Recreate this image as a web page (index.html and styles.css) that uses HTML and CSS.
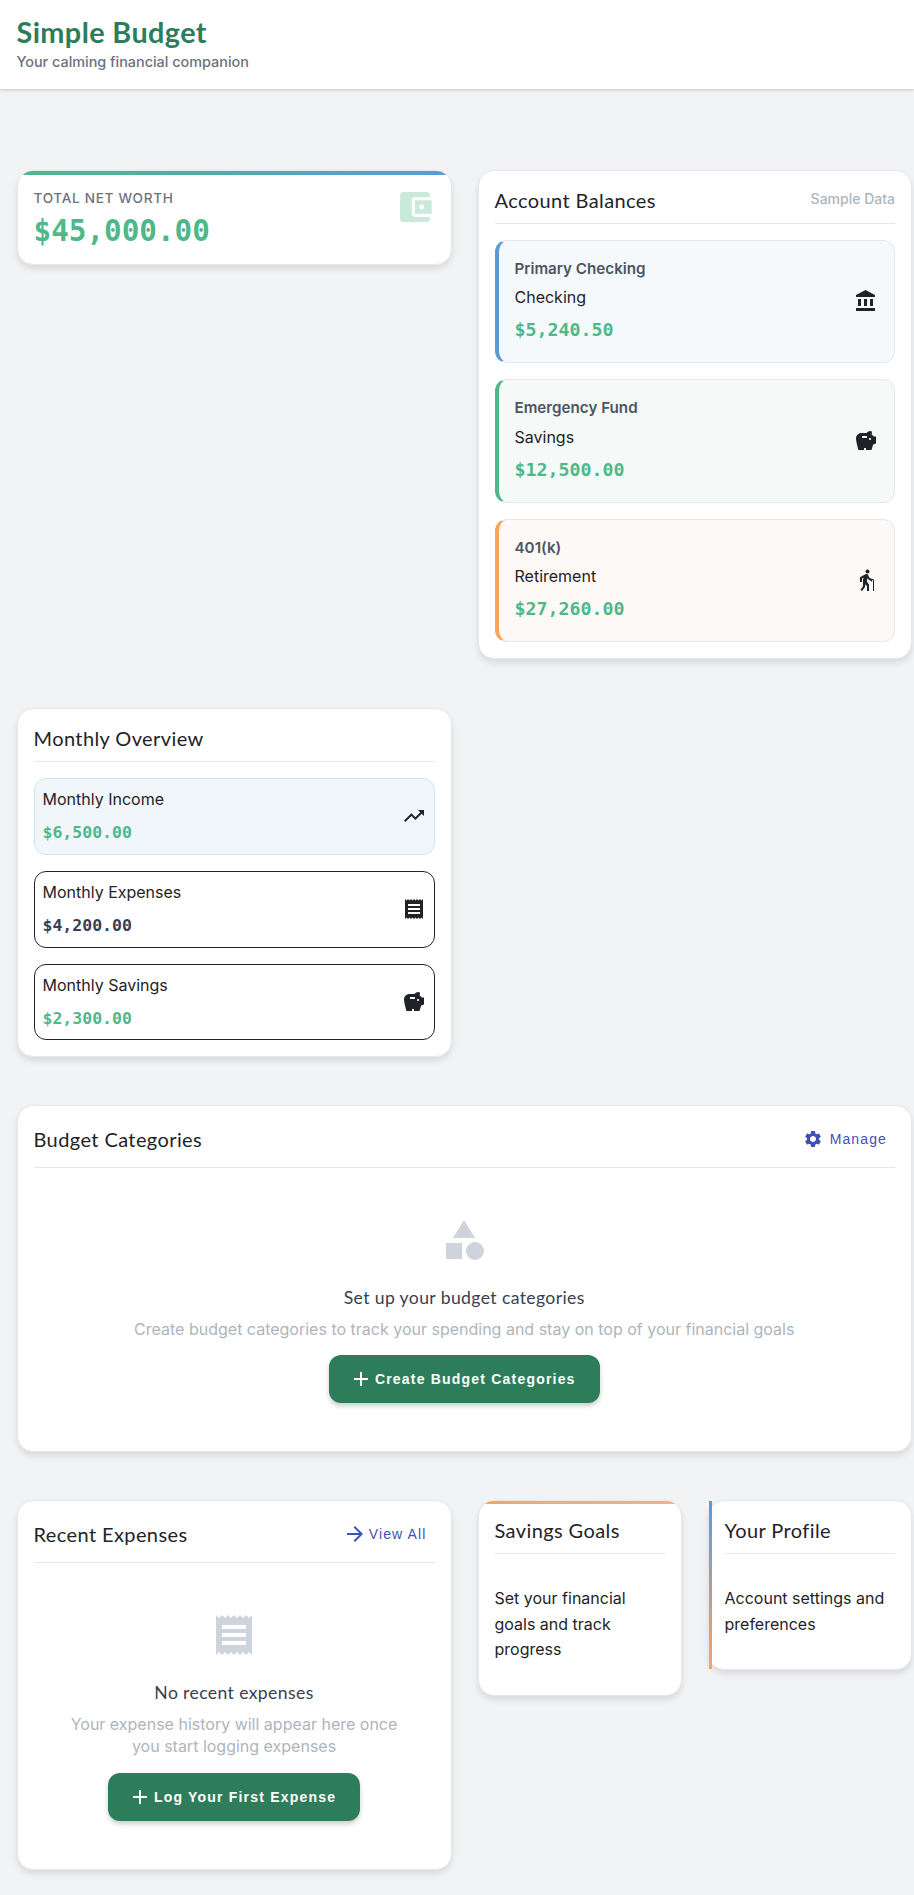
FILE: index.html
```html
<!DOCTYPE html>
<html lang="en">
<head>
<meta charset="utf-8">
<title>Simple Budget</title>
<link rel="stylesheet" href="styles.css">
</head>
<body>
<header class="topbar">
  <h1 class="brand">Simple Budget</h1>
  <p class="tagline">Your calming financial companion</p>
</header>
<main class="layout">
  <section class="card net-worth">
    <div class="net-label">Total Net Worth</div>
    <div class="net-value">$45,000.00</div>
    <svg class="net-icon" viewBox="0 0 24 24"><path d="M21 18v1c0 1.1-.9 2-2 2H5c-1.11 0-2-.9-2-2V5c0-1.1.89-2 2-2h14c1.1 0 2 .9 2 2v1h-9c-1.11 0-2 .9-2 2v8c0 1.1.89 2 2 2h9zm-9-2h10V8H12v8zm4-2.500c-.83 0-1.500-.67-1.500-1.500s.67-1.500 1.500-1.500 1.500.67 1.500 1.500-.67 1.500-1.500 1.500z"/></svg>
  </section>

  <section class="card accounts">
    <div class="card-head">
      <h2 class="card-title">Account Balances</h2>
      <span class="muted-note">Sample Data</span>
    </div>
    <div class="stack">
      <article class="account account-blue">
        <div>
          <div class="account-name">Primary Checking</div>
          <div class="account-type">Checking</div>
          <div class="account-amount">$5,240.50</div>
        </div>
        <svg class="icon" viewBox="0 0 24 24"><path d="M4 10v7h3v-7H4zm6 0v7h3v-7h-3zM2 22h19v-3H2v3zm14-12v7h3v-7h-3zm-4.500-9L2 6v2h19V6l-9.500-5z"/></svg>
      </article>
      <article class="account account-green">
        <div>
          <div class="account-name">Emergency Fund</div>
          <div class="account-type">Savings</div>
          <div class="account-amount">$12,500.00</div>
        </div>
        <svg class="icon" viewBox="0 0 24 24"><path d="M19.830 7.500l-2.270-2.270c.07-.42.18-.81.32-1.150.08-.18.12-.37.12-.58C18 2.670 17.330 2 16.500 2c-1.640 0-3.090.79-4 2h-5C4.460 4 2 6.460 2 9.500S4.500 21 4.500 21H10v-2h2v2h5.500l1.680-5.590L22 14.470V7.500h-2.170zM13 9H8V7h5v2zm3 2c-.55 0-1-.45-1-1s.45-1 1-1 1 .45 1 1-.45 1-1 1z"/></svg>
      </article>
      <article class="account account-orange">
        <div>
          <div class="account-name">401(k)</div>
          <div class="account-type">Retirement</div>
          <div class="account-amount">$27,260.00</div>
        </div>
        <svg class="icon" viewBox="0 0 24 24"><path d="M13.500 5.500c1.100 0 2-.9 2-2s-.9-2-2-2-2 .9-2 2 .9 2 2 2zM20 12.500V23h-1V12.500c0-.28-.22-.5-.5-.5s-.5.220-.5.500v1h-1v-.69c-1.460-.38-2.700-1.290-3.510-2.520-.31.870-.49 1.780-.49 2.710 0 .23.020.46.030.69L15 16.500V23h-2v-5l-1.780-1.780L11 19l-3 4-1.600-1.200L9 18.330V13c0-1.150.18-2.290.5-3.390l-1.500.85V14H6V9.300l5.400-3.070v.01c.59-.31 1.320-.33 1.940.03.36.21.63.51.8.85l.79 1.670C15.580 10.100 16.940 11 18.500 11c.83 0 1.500.67 1.500 1.500z"/></svg>
      </article>
    </div>
  </section>

  <section class="card">
    <div class="card-head">
      <h2 class="card-title">Monthly Overview</h2>
    </div>
    <div class="stack">
      <article class="metric metric-income">
        <div>
          <div class="metric-label">Monthly Income</div>
          <div class="metric-amount">$6,500.00</div>
        </div>
        <svg class="icon" viewBox="0 0 24 24"><path d="M16 6l2.290 2.290-4.880 4.880-4-4L2 16.590 3.410 18l6-6 4 4 6.300-6.290L22 12V6z"/></svg>
      </article>
      <article class="metric">
        <div>
          <div class="metric-label">Monthly Expenses</div>
          <div class="metric-amount metric-dark">$4,200.00</div>
        </div>
        <svg class="icon" viewBox="0 0 24 24"><path d="M18 17H6v-2h12v2zm0-4H6v-2h12v2zm0-4H6V7h12v2zM3 22l1.500-1.500L6 22l1.500-1.500L9 22l1.500-1.500L12 22l1.500-1.500L15 22l1.500-1.500L18 22l1.500-1.500L21 22V2l-1.500 1.500L18 2l-1.500 1.500L15 2l-1.500 1.500L12 2l-1.500 1.500L9 2 7.500 3.500 6 2 4.500 3.500 3 2v20z"/></svg>
      </article>
      <article class="metric">
        <div>
          <div class="metric-label">Monthly Savings</div>
          <div class="metric-amount">$2,300.00</div>
        </div>
        <svg class="icon" viewBox="0 0 24 24"><path d="M19.830 7.500l-2.270-2.270c.07-.42.18-.81.32-1.150.08-.18.12-.37.12-.58C18 2.670 17.330 2 16.500 2c-1.640 0-3.090.79-4 2h-5C4.460 4 2 6.460 2 9.500S4.500 21 4.500 21H10v-2h2v2h5.500l1.680-5.590L22 14.470V7.500h-2.170zM13 9H8V7h5v2zm3 2c-.55 0-1-.45-1-1s.45-1 1-1 1 .45 1 1-.45 1-1 1z"/></svg>
      </article>
    </div>
  </section>

  <section class="card span-2">
    <div class="card-head">
      <h2 class="card-title">Budget Categories</h2>
      <button class="link-btn" type="button">
        <svg class="icon icon-gear" viewBox="0 0 24 24"><path d="M19.140 12.940c.04-.3.060-.61.060-.94 0-.32-.02-.64-.07-.94l2.030-1.580c.18-.14.23-.41.12-.61l-1.920-3.320c-.12-.22-.37-.29-.59-.22l-2.390.96c-.5-.38-1.030-.7-1.620-.94l-.36-2.540c-.04-.24-.24-.41-.48-.41h-3.840c-.24 0-.43.170-.47.410l-.36 2.540c-.59.240-1.130.570-1.620.940l-2.390-.96c-.22-.08-.47 0-.59.220L2.740 8.870c-.12.210-.08.470.120.610l2.030 1.580c-.05.3-.09.630-.09.940s.02.640.07.940l-2.030 1.580c-.18.140-.23.410-.12.610l1.920 3.320c.12.220.37.290.59.220l2.390-.96c.5.380 1.030.7 1.620.94l.36 2.540c.05.240.24.410.48.410h3.840c.24 0 .44-.17.47-.41l.36-2.540c.59-.24 1.130-.56 1.620-.94l2.390.96c.22.080.47 0 .59-.22l1.920-3.320c.12-.22.070-.47-.12-.61l-2.010-1.580zM12 15.600c-1.980 0-3.600-1.620-3.600-3.600s1.620-3.600 3.600-3.600 3.600 1.620 3.600 3.600-1.620 3.600-3.600 3.600z"/></svg>
        Manage
      </button>
    </div>
    <div class="empty">
      <svg class="empty-icon" viewBox="0 0 24 24"><path d="M12 2l-5.500 9h11z"/><circle cx="17.500" cy="17.500" r="4.500"/><path d="M3 13.500h8v8H3z"/></svg>
      <h3 class="empty-title">Set up your budget categories</h3>
      <p class="empty-text">Create budget categories to track your spending and stay on top of your financial goals</p>
      <button class="primary-btn" type="button">
        <svg class="icon" viewBox="0 0 24 24"><path d="M19 13h-6v6h-2v-6H5v-2h6V5h2v6h6v2z"/></svg>
        Create Budget Categories
      </button>
    </div>
  </section>

  <section class="card">
    <div class="card-head">
      <h2 class="card-title">Recent Expenses</h2>
      <button class="link-btn" type="button">
        <svg class="icon" viewBox="0 0 24 24"><path d="M12 4l-1.410 1.410L16.170 11H4v2h12.170l-5.580 5.590L12 20l8-8z"/></svg>
        View All
      </button>
    </div>
    <div class="empty">
      <svg class="empty-icon" viewBox="0 0 24 24"><path d="M18 17H6v-2h12v2zm0-4H6v-2h12v2zm0-4H6V7h12v2zM3 22l1.500-1.500L6 22l1.500-1.500L9 22l1.500-1.500L12 22l1.500-1.500L15 22l1.500-1.500L18 22l1.500-1.500L21 22V2l-1.500 1.500L18 2l-1.500 1.500L15 2l-1.500 1.500L12 2l-1.500 1.500L9 2 7.500 3.500 6 2 4.500 3.500 3 2v20z"/></svg>
      <h3 class="empty-title">No recent expenses</h3>
      <p class="empty-text">Your expense history will appear here once you start logging expenses</p>
      <button class="primary-btn" type="button">
        <svg class="icon" viewBox="0 0 24 24"><path d="M19 13h-6v6h-2v-6H5v-2h6V5h2v6h6v2z"/></svg>
        Log Your First Expense
      </button>
    </div>
  </section>

  <div class="pair">
    <section class="card goals">
      <div class="card-head">
        <h2 class="card-title">Savings Goals</h2>
      </div>
      <p class="card-copy">Set your financial goals and track progress</p>
    </section>
    <section class="card profile">
      <div class="card-head">
        <h2 class="card-title">Your Profile</h2>
      </div>
      <p class="card-copy">Account settings and preferences</p>
    </section>
  </div>
</main>
</body>
</html>
```
FILE: styles.css
```css
* { box-sizing: border-box; }

html, body { margin: 0; padding: 0; }

body {
  background: #f1f3f5;
  color: #1f2328;
  font-family: Inter, "Liberation Sans", sans-serif;
  font-size: 16px;
  line-height: 1.6;
}

h1, h2, h3, p { margin: 0; }

.topbar {
  height: 89px;
  padding: 16px 16.500px;
  background: #fff;
  box-shadow: 0 1px 3px rgba(0, 0, 0, .2);
}

.brand {
  color: #2d7d5a;
  font-family: Lato, sans-serif;
  font-size: 28.800px;
  font-weight: 700;
  letter-spacing: .4px;
  line-height: 32px;
}

.tagline {
  margin-top: 3px;
  color: #6b7280;
  font-size: 14.400px;
  font-weight: 500;
  line-height: 22px;
}

.layout {
  display: grid;
  grid-template-columns: 435px 434.500px;
  column-gap: 26px;
  row-gap: 47.500px;
  align-items: start;
  padding: 80.500px 2px 25px 16.500px;
}

.span-2 { grid-column: span 2; }

.card {
  position: relative;
  padding: 16px;
  background: #fff;
  border: 1px solid #e5e7eb;
  border-radius: 16px;
  box-shadow: 0 4px 6px rgba(0, 0, 0, .1);
}

.accounts { margin-bottom: 1.500px; }

.net-worth {
  overflow: hidden;
  min-height: 95px;
}

.net-worth::before {
  content: "";
  position: absolute;
  top: 0;
  left: 0;
  right: 0;
  height: 4px;
  background: linear-gradient(90deg, #4fb88a, #5b9bd5);
}

.net-label {
  color: #6b7280;
  font-size: 13.600px;
  font-weight: 500;
  letter-spacing: .68px;
  line-height: 22.400px;
  text-transform: uppercase;
}

.net-value {
  margin-top: 5.800px;
  color: #4fb88a;
  font-family: "DejaVu Sans Mono", monospace;
  font-size: 29.300px;
  font-weight: 700;
  line-height: 33.600px;
}

.net-icon {
  position: absolute;
  top: 16px;
  right: 16px;
  width: 40px;
  height: 40px;
  fill: #4fb88a;
  opacity: .3;
}

.card-head {
  display: flex;
  align-items: center;
  justify-content: space-between;
  margin-bottom: 16px;
  padding-bottom: 10px;
  border-bottom: 1px solid #e5e7eb;
}

.card-title {
  color: #1f2328;
  font-family: Lato, sans-serif;
  font-size: 20px;
  font-weight: 400;
  letter-spacing: .4px;
  line-height: 26px;
}

.muted-note {
  color: #adb5bd;
  font-size: 14px;
  font-weight: 500;
}

.stack {
  display: flex;
  flex-direction: column;
  gap: 16px;
}

.icon {
  flex: none;
  width: 24px;
  height: 24px;
  fill: currentColor;
}

.account {
  display: flex;
  align-items: center;
  justify-content: space-between;
  padding: 16px;
  border: 1px solid #e5e7eb;
  border-left: 4px solid;
  border-radius: 12px;
}

.account-blue { background: #f6f9fc; border-left-color: #5b9bd5; }
.account-green { background: #f5f9f8; border-left-color: #4fb88a; }
.account-orange { background: #fdf9f6; border-left-color: #f6a560; }

.account-name {
  color: #4b5563;
  font-size: 15.200px;
  font-weight: 600;
  line-height: 24.320px;
}

.account-type {
  margin-top: 4.200px;
  font-size: 16px;
  line-height: 25.600px;
}

.account-amount {
  margin-top: 3.500px;
  color: #4fb88a;
  font-family: "DejaVu Sans Mono", monospace;
  font-size: 18.300px;
  font-weight: 700;
  line-height: 31.900px;
}

.metric {
  display: flex;
  align-items: center;
  justify-content: space-between;
  padding: 8px;
  border: 1px solid #1f2328;
  border-radius: 12px;
}

.metric-income {
  background: #f1f6fb;
  border-color: #cfe3f5;
}

.metric-label {
  font-size: 16px;
  line-height: 25.600px;
}

.metric-amount {
  margin-top: 7.600px;
  color: #4fb88a;
  font-family: "DejaVu Sans Mono", monospace;
  font-size: 16.500px;
  font-weight: 700;
  line-height: 25.600px;
}

.metric-dark { color: #374151; }

.link-btn {
  display: flex;
  align-items: center;
  gap: 2px;
  height: 35px;
  padding: 0 8px;
  background: none;
  border: 0;
  color: #3f51b5;
  font-family: "Liberation Sans", Arial, sans-serif;
  font-size: 14px;
  letter-spacing: 1.120px;
}

.icon-gear {
  width: 20px;
  height: 20px;
  margin-right: 5px;
}

.empty {
  display: flex;
  flex-direction: column;
  align-items: center;
  padding: 32px;
  text-align: center;
}

.empty-icon {
  width: 48px;
  height: 48px;
  fill: #ced4dc;
}

.empty-title {
  margin-top: 20px;
  color: #374151;
  font-family: Lato, sans-serif;
  font-size: 17.600px;
  font-weight: 400;
  letter-spacing: .38px;
  line-height: 28px;
}

.empty-text {
  margin-top: 6px;
  color: #adb5bd;
  font-size: 16px;
  line-height: 22.400px;
}

.primary-btn {
  display: flex;
  align-items: center;
  gap: 2px;
  height: 48px;
  margin-top: 15px;
  padding: 0 24px 0 20px;
  background: #2d7d5a;
  border: 0;
  border-radius: 12px;
  box-shadow: 0 3px 5px rgba(0, 0, 0, .2);
  color: #fff;
  font-family: "Liberation Sans", Arial, sans-serif;
  font-size: 14px;
  font-weight: 700;
  letter-spacing: 1.200px;
}

.pair {
  display: grid;
  grid-template-columns: 204px 204.500px;
  column-gap: 26px;
  align-items: start;
}

.card-copy {
  padding: 16.500px 0 16px;
  font-size: 16px;
  line-height: 25.600px;
}

.goals { overflow: hidden; }

.goals::before {
  content: "";
  position: absolute;
  top: 0;
  left: 0;
  right: 0;
  height: 3px;
  background: linear-gradient(90deg, #f6a560, #f6b280);
}

.profile::before {
  content: "";
  position: absolute;
  top: 0;
  bottom: 0;
  left: 0;
  width: 3px;
  background: linear-gradient(180deg, #5b9bd5, #f6a560);
}
```
